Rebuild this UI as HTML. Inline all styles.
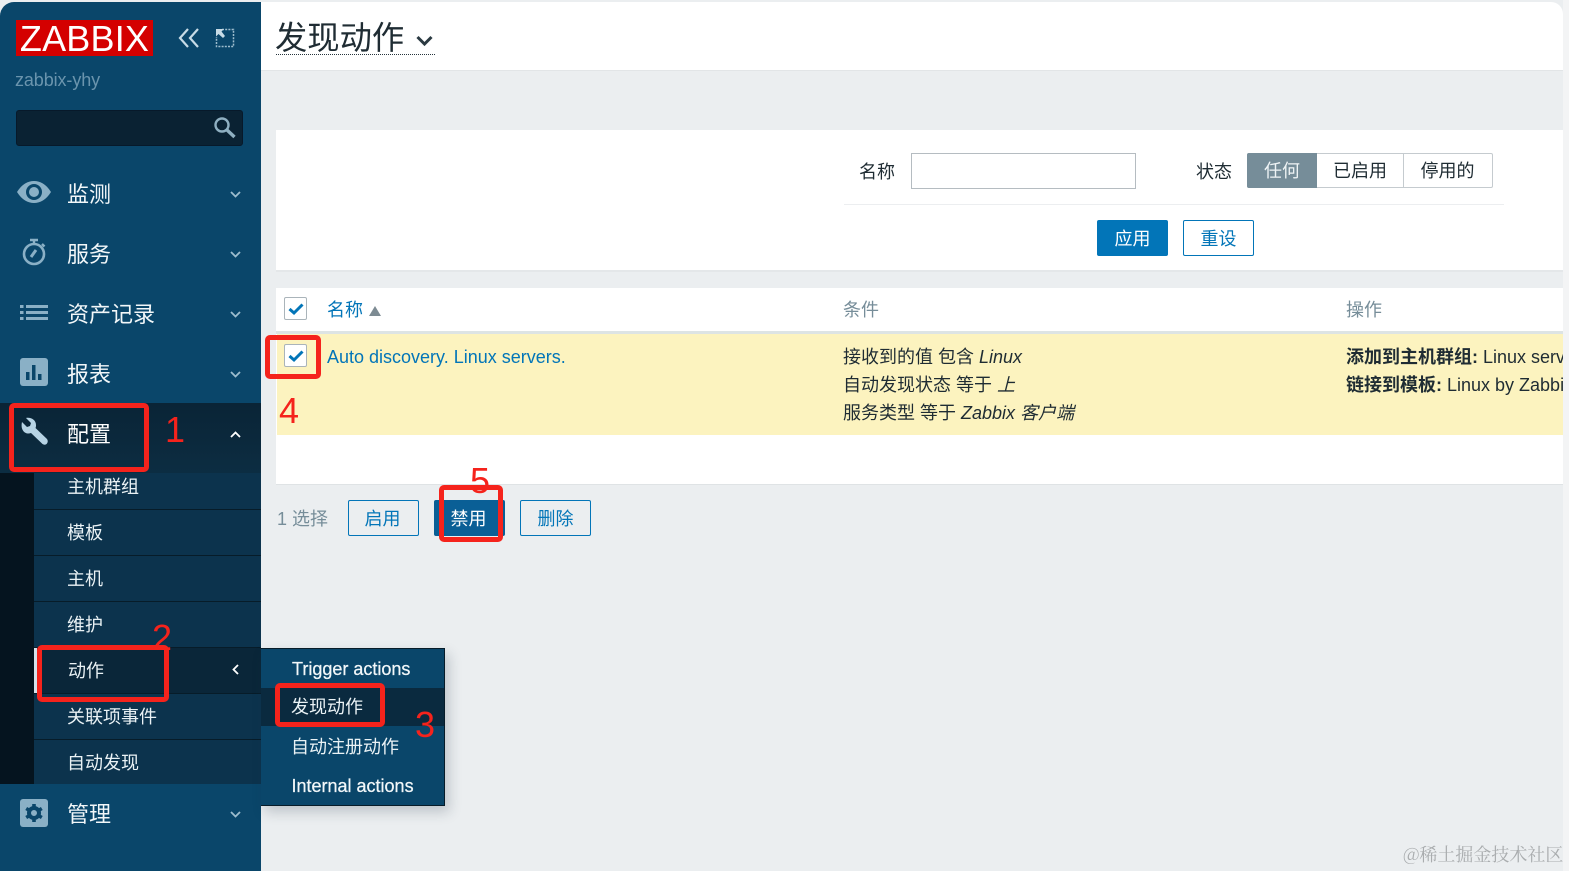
<!DOCTYPE html>
<html lang="zh"><head><meta charset="utf-8"><title>发现动作</title>
<style>
*{box-sizing:border-box}
html,body{margin:0;padding:0;width:1569px;height:871px;overflow:hidden;background:#ebeef0}
body{position:relative;font-family:"Liberation Sans","WenQuanYi Zen Hei","Noto Sans CJK SC",sans-serif;font-size:18px;color:#1f2c33}
.a{position:absolute;white-space:nowrap}
.m{position:absolute;left:67px;font-size:22px;line-height:28px;color:#f2f7f9;white-space:nowrap}
.s{position:absolute;left:67px;font-size:18px;line-height:24px;color:#eaf2f5;white-space:nowrap}
.btn{position:absolute;height:36px;border:1px solid #0275b8;border-radius:2px;color:#0275b8;text-align:center;font-size:18px;line-height:36px;background:#fff}
.sep{position:absolute;left:34px;width:227px;height:1px;background:#071c29}
.r{position:absolute;border:5px solid #f5231c;border-radius:5px}
.n{position:absolute;color:#f5231c;font-size:36px;line-height:36px}
.cb{position:absolute;width:23px;height:23px;border:1px solid #aab4ba;border-radius:2px;background:#fff}
svg{position:absolute;overflow:visible}
</style></head><body>
<div class="a" style="left:1563px;top:0;width:6px;height:871px;background:#f3f4f5"></div>
<!-- sidebar -->
<div class="a" style="left:0;top:2px;width:261px;height:869px;background:#0a466a;border-top-left-radius:14px"></div>
<div class="a" style="left:0;top:403px;width:261px;height:70px;background:linear-gradient(#0a2436,#0c2d42)"></div>
<div class="a" style="left:0;top:473px;width:34px;height:311px;background:#05141f"></div>
<div class="a" style="left:34px;top:473px;width:227px;height:311px;background:#0c334d"></div>
<div class="sep" style="top:509px"></div><div class="sep" style="top:555px"></div><div class="sep" style="top:601px"></div><div class="sep" style="top:647px"></div><div class="sep" style="top:693px"></div><div class="sep" style="top:739px"></div>
<div class="a" style="left:34px;top:648px;width:227px;height:45px;background:#0a2639;border-left:3px solid #d5e2ec"></div>
<!-- logo -->
<div class="a" style="left:16px;top:20px;width:137px;height:36px;background:#d40000;color:#fff;font-size:36px;line-height:37px;text-align:center;letter-spacing:.2px">ZABBIX</div>
<svg style="left:178px;top:28px" width="22" height="20" viewBox="0 0 22 20" fill="none" stroke="#c7dbe6" stroke-width="2.2"><path d="M10 1 2 10l8 9M20 1l-8 9 8 9"/></svg>
<svg style="left:215px;top:28px" width="20" height="20" viewBox="0 0 20 20" fill="none"><path d="M7 1.500h11.500V18.500H1.500V9" stroke="#9dbccd" stroke-width="1.500" stroke-dasharray="2 1.200"/><path d="M1 1h8L6.500 3.500 10 8 8 10 3.500 6 1 8.500z" fill="#c7dbe6"/></svg>
<div class="a" style="left:15px;top:68px;font-size:18px;line-height:24px;color:#6a94ad;letter-spacing:-.1px">zabbix-yhy</div>
<div class="a" style="left:16px;top:110px;width:227px;height:36px;background:#0a2233;border:1px solid #07192a;border-radius:3px"></div>
<svg style="left:213px;top:116px" width="24" height="24" viewBox="0 0 24 24" fill="none" stroke="#8fb0c2"><circle cx="9" cy="9" r="6.500" stroke-width="2.400"/><path d="M14 14l7.500 7" stroke-width="3.400"/></svg>
<!-- icons -->
<svg style="left:17px;top:180px" width="34" height="24" viewBox="0 0 34 24"><path d="M0 12C5 4 11 1 17 1s12 3 17 11c-5 8-11 11-17 11S5 20 0 12z" fill="#8ab0c6"/><circle cx="17" cy="12" r="8" fill="#0a466a"/><circle cx="17" cy="12" r="5" fill="#8ab0c6"/></svg>
<svg style="left:22px;top:238px" width="25" height="28" viewBox="0 0 25 28" fill="none" stroke="#8ab0c6"><circle cx="12" cy="16" r="10" stroke-width="2.600"/><path d="M8 2h8M12 2v4M20 6l2.500 2.500" stroke-width="2.400"/><path d="M9 19l5-7" stroke-width="3"/></svg>
<svg style="left:20px;top:304px" width="28" height="17" viewBox="0 0 28 17" fill="#8ab0c6"><rect x="0" y="1" width="3.500" height="3"/><rect x="0" y="7" width="3.500" height="3"/><rect x="0" y="13" width="3.500" height="3"/><rect x="6" y="1" width="22" height="3"/><rect x="6" y="7" width="22" height="3"/><rect x="6" y="13" width="22" height="3"/></svg>
<svg style="left:20px;top:358px" width="28" height="28" viewBox="0 0 28 28"><rect width="28" height="28" rx="3" fill="#8ab0c6"/><rect x="6" y="14" width="3.500" height="8" fill="#0a466a"/><rect x="12" y="7" width="3.500" height="15" fill="#0a466a"/><rect x="18" y="16" width="3.500" height="6" fill="#0a466a"/></svg>
<svg style="left:20px;top:418px" width="28" height="28" viewBox="0 0 28 28"><path d="M2 4 7 9l3-1 1-3-5-5c5-1 10 2 10 7 0 1 0 2-.5 3L27 21c1 1.500 1 3 0 4.500s-3 1.500-4.500.5L11 15c-5 2-11-2-9-11z" fill="#b6d3e4"/></svg>
<svg style="left:20px;top:799px" width="28" height="28" viewBox="0 0 28 28"><rect width="28" height="28" rx="3" fill="#8ab0c6"/><circle cx="14" cy="14" r="5" fill="none" stroke="#0a466a" stroke-width="4"/><path d="M14 5v3.500M14 19.500V23M6.200 9.500l3 1.750M18.800 16.750l3 1.750M6.200 18.500l3-1.750M18.800 11.250l3-1.750" stroke="#0a466a" stroke-width="3.600"/></svg>
<!-- menu -->
<div class="m" style="top:181px">监测</div><div class="m" style="top:241px">服务</div><div class="m" style="top:301px">资产记录</div><div class="m" style="top:361px">报表</div><div class="m" style="top:421px;color:#fff">配置</div><div class="m" style="top:801px">管理</div>
<svg style="left:230px;top:190px" width="11" height="9" fill="none" stroke="#9dbccd" stroke-width="1.800"><path d="M1 2l4.500 4.500L10 2"/></svg>
<svg style="left:230px;top:250px" width="11" height="9" fill="none" stroke="#9dbccd" stroke-width="1.800"><path d="M1 2l4.500 4.500L10 2"/></svg>
<svg style="left:230px;top:310px" width="11" height="9" fill="none" stroke="#9dbccd" stroke-width="1.800"><path d="M1 2l4.500 4.500L10 2"/></svg>
<svg style="left:230px;top:370px" width="11" height="9" fill="none" stroke="#9dbccd" stroke-width="1.800"><path d="M1 2l4.500 4.500L10 2"/></svg>
<svg style="left:230px;top:810px" width="11" height="9" fill="none" stroke="#9dbccd" stroke-width="1.800"><path d="M1 2l4.500 4.500L10 2"/></svg>
<svg style="left:230px;top:430px" width="11" height="9" fill="none" stroke="#fff" stroke-width="1.800"><path d="M1 7l4.500-4.500L10 7"/></svg>
<svg style="left:231px;top:664px" width="9" height="11" fill="none" stroke="#fff" stroke-width="1.800"><path d="M7 1L2.500 5.500 7 10"/></svg>
<div class="s" style="top:475px">主机群组</div><div class="s" style="top:521px">模板</div><div class="s" style="top:567px">主机</div><div class="s" style="top:613px">维护</div><div class="s" style="left:68px;top:659px">动作</div><div class="s" style="top:705px">关联项事件</div><div class="s" style="top:751px">自动发现</div>
<!-- flyout -->
<div class="a" style="left:261px;top:648px;width:184px;height:158px;background:#0a466a;border:1px solid #071c29;border-left:0;box-shadow:4px 6px 12px rgba(30,50,70,.22)"></div>
<div class="a" style="left:261px;top:688px;width:183px;height:38px;background:#0a2a3f"></div>
<div class="s" style="left:292px;top:657px;color:#f2f7f9;-webkit-text-stroke:.25px #f2f7f9">Trigger actions</div><div class="s" style="left:291px;top:695px">发现动作</div><div class="s" style="left:291px;top:735px">自动注册动作</div><div class="s" style="left:291.500px;top:774px;color:#f2f7f9;-webkit-text-stroke:.25px #f2f7f9">Internal actions</div>
<!-- header -->
<div class="a" style="left:261px;top:2px;width:1302px;height:69px;background:#fff;border-top-right-radius:12px;border-bottom:1px solid #e2e5e7"></div>
<div class="a" style="left:275px;top:17px;font-size:32.300px;line-height:42px;color:#1f2c33">发现动作</div>
<svg style="left:416px;top:35px" width="17" height="12" fill="none" stroke="#2b3a42" stroke-width="3"><path d="M1.500 2l7 7 7-7"/></svg>
<div class="a" style="left:276px;top:54px;width:159px;border-top:1px dotted #26343c"></div>
<!-- filter -->
<div class="a" style="left:276px;top:130px;width:1287px;height:142px;background:#fff;border-bottom:2px solid #e4e7e9"></div>
<div class="a" style="left:859px;top:160px;line-height:24px">名称</div>
<div class="a" style="left:911px;top:153px;width:225px;height:36px;border:1px solid #b5bcc1;background:#fff"></div>
<div class="a" style="left:1196px;top:160px;line-height:24px">状态</div>
<div class="a" style="left:1247px;top:153px;width:246px;height:35px;border:1px solid #c5cbcf;border-radius:2px;background:#fff"></div>
<div class="a" style="left:1247px;top:153px;width:70px;height:35px;background:#768d99;border-radius:2px 0 0 2px;color:#eef3f5;text-align:center;line-height:37px">任何</div>
<div class="a" style="left:1317px;top:153px;width:87px;height:35px;border-right:1px solid #c5cbcf;text-align:center;line-height:37px">已启用</div>
<div class="a" style="left:1404px;top:153px;width:87px;height:35px;text-align:center;line-height:37px">停用的</div>
<div class="a" style="left:844px;top:204px;width:660px;height:1px;background:#eceef0"></div>
<div class="btn" style="left:1097px;top:220px;width:71px;background:#0275b8;color:#fff">应用</div>
<div class="btn" style="left:1183px;top:220px;width:71px">重设</div>
<!-- table -->
<div class="a" style="left:276px;top:288px;width:1287px;height:197px;background:#fff;border-bottom:1px solid #dfe3e5"></div>
<div class="a" style="left:276px;top:331px;width:1287px;height:3px;background:#dde4e4"></div>
<div class="a" style="left:277px;top:334px;width:1286px;height:101px;background:#fcf3bf"></div>
<div class="cb" style="left:284px;top:297px"></div>
<svg style="left:288px;top:303px" width="16" height="12" fill="none" stroke="#0275b8" stroke-width="3"><path d="M1.500 6l4.500 4 8.500-8.500"/></svg>
<div class="cb" style="left:284px;top:344px"></div>
<svg style="left:288px;top:350px" width="16" height="12" fill="none" stroke="#0275b8" stroke-width="3"><path d="M1.500 6l4.500 4 8.500-8.500"/></svg>
<div class="a" style="left:327px;top:298px;line-height:24px;color:#0275b8">名称</div>
<svg style="left:369px;top:306px" width="12" height="10"><path d="M6 0l6 10H0z" fill="#7d8b93"/></svg>
<div class="a" style="left:843px;top:298px;line-height:24px;color:#768d99">条件</div>
<div class="a" style="left:1346px;top:298px;line-height:24px;color:#768d99">操作</div>
<div class="a" style="left:327px;top:345px;line-height:24px;color:#0275b8">Auto discovery. Linux servers.</div>
<div class="a" style="left:843px;top:345px;line-height:24px">接收到的值 包含 <i>Linux</i></div>
<div class="a" style="left:843px;top:373px;line-height:24px">自动发现状态 等于 <i>上</i></div>
<div class="a" style="left:843px;top:401px;line-height:24px">服务类型 等于 <i>Zabbix 客户端</i></div>
<div class="a" style="left:1346px;top:345px;width:217px;overflow:hidden;line-height:24px"><b>添加到主机群组:</b> Linux servers</div>
<div class="a" style="left:1346px;top:373px;width:217px;overflow:hidden;line-height:24px"><b>链接到模板:</b> Linux by Zabbix agent</div>
<!-- actions -->
<div class="a" style="left:277px;top:507px;line-height:24px;color:#768d99">1 选择</div>
<div class="btn" style="left:348px;top:500px;width:71px;padding-right:2px;background:#ebeef0">启用</div>
<div class="btn" style="left:434px;top:500px;width:71px;padding-right:2px;background:#0a5f96;color:#fff;border-color:#0a5f96">禁用</div>
<div class="btn" style="left:520px;top:500px;width:71px;background:#ebeef0">删除</div>
<!-- annotations -->
<div class="r" style="left:9px;top:403px;width:140px;height:69px"></div>
<div class="n" style="left:165px;top:412px">1</div>
<div class="r" style="left:37px;top:645px;width:132px;height:57px"></div>
<div class="n" style="left:152px;top:620px">2</div>
<div class="r" style="left:275px;top:683px;width:110px;height:44px"></div>
<div class="n" style="left:415px;top:707px">3</div>
<div class="r" style="left:265px;top:335px;width:56px;height:44px"></div>
<div class="n" style="left:279px;top:393px">4</div>
<div class="r" style="left:439px;top:485px;width:64px;height:57px"></div>
<div class="n" style="left:470px;top:463px">5</div>
<div class="a" style="left:1403px;top:842px;font-size:18px;line-height:24px;color:#a9acae;font-family:'Noto Serif CJK SC','Liberation Serif',serif">@稀土掘金技术社区</div>
</body></html>
